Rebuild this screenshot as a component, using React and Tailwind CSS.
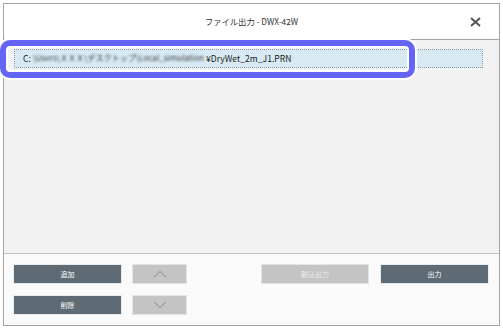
import React from "react";

const font = { fontFamily: '"Noto Sans CJK JP", "Noto Sans", sans-serif' };

function Chevron({ up }) {
  return (
    <svg width="14" height="8" viewBox="0 0 14 8" fill="none">
      <polyline
        points={up ? "1,7 7,1.5 13,7" : "1,1 7,6.5 13,1"}
        stroke="#8a8a8a"
        strokeWidth="1"
      />
    </svg>
  );
}

function DarkBtn({ children }) {
  return (
    <div className="w-[109px] h-[20px] bg-[#5f6b74] border border-[#e8ecef] flex items-center justify-center text-white text-[7px] leading-none">
      {children}
    </div>
  );
}

export default function App() {
  return (
    <div className="w-[503px] h-[328px] bg-white relative overflow-hidden" style={font}>
      <div className="ml-[3px] mt-[3px] w-[497px] h-[323px] border border-[#a4a4a4] flex flex-col">
        <div className="h-[36px] shrink-0 bg-white border-b border-[#a4a4a4] relative flex items-center justify-center">
          <span className="text-[8.3px] text-[#333] leading-none">ファイル出力 - DWX-42W</span>
          <svg className="absolute right-[18px] top-[13px]" width="11" height="10" viewBox="0 0 11 10">
            <path d="M1 1 L10 9 M10 1 L1 9" stroke="#555" strokeWidth="2" />
          </svg>
        </div>
        <div className="flex-1 bg-[#f2f2f2] pt-[9px] pl-[10px] pr-[16px] border-b border-[#c4c4c4]">
          <div className="h-[19px] bg-[#d7eaf3] border border-dotted border-[#8e9aa2] flex items-center pl-[8px] text-[8.6px] text-[#222] leading-none whitespace-nowrap">
            <span>C:</span>
            <span className="ml-[2px] mr-[2px] blur-[1px] text-[#3a3a3a] text-[8.1px]">\Users\ＸＸＸ\デスクトップ\Local_simulation</span>
            <span>¥DryWet_2m_J1.PRN</span>
          </div>
        </div>
        <div className="h-[71px] shrink-0 bg-[#fafafa] pt-[10px] pl-[9px] pr-[10px] flex flex-col gap-[11px]">
          <div className="flex justify-between">
            <div className="flex gap-[10px]">
              <DarkBtn>追加</DarkBtn>
              <div className="w-[55px] h-[20px] bg-[#c4c4c4] border border-[#e4e4e4] flex items-center justify-center">
                <Chevron up />
              </div>
            </div>
            <div className="flex gap-[11px]">
              <div className="w-[108px] h-[20px] bg-[#c4c4c4] border border-[#e4e4e4] flex items-center justify-center text-[#eeeeee] text-[7px] leading-none">
                割込出力
              </div>
              <DarkBtn>出力</DarkBtn>
            </div>
          </div>
          <div className="flex gap-[10px]">
            <DarkBtn>削除</DarkBtn>
            <div className="w-[55px] h-[20px] bg-[#c4c4c4] border border-[#e4e4e4] flex items-center justify-center">
              <Chevron />
            </div>
          </div>
        </div>
      </div>
      <div className="absolute left-0 top-[40px] w-[415px] h-[38px] rounded-[10px] border-[6px] border-[#6464f5] shadow-[0_0_0_2px_#ffffff,inset_0_0_0_2px_#ffffff]" />
    </div>
  );
}
